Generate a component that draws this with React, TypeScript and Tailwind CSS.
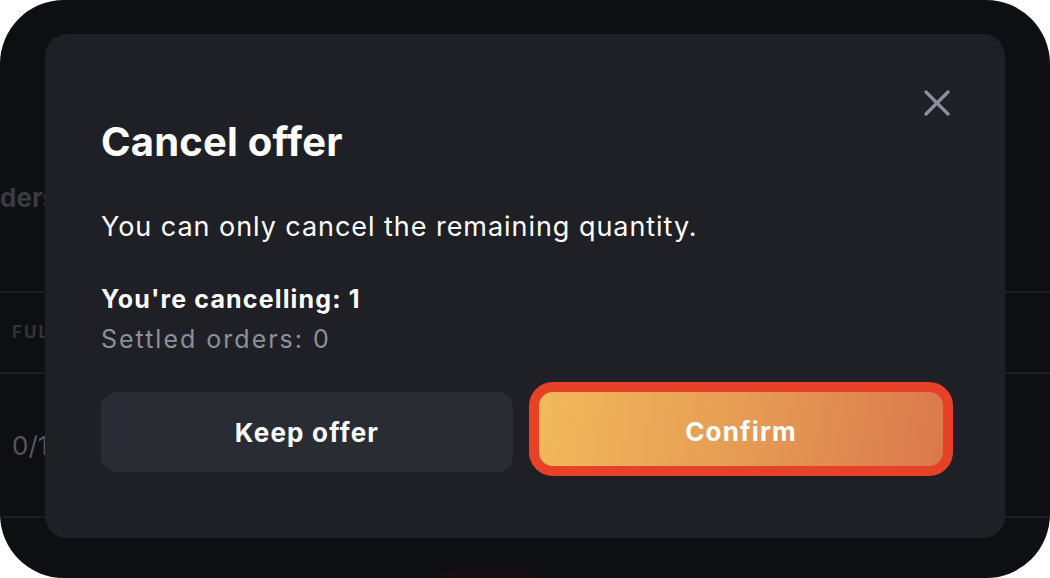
import React from "react";

const font = { fontFamily: "Inter, 'Noto Sans', 'Liberation Sans', sans-serif" };

export default function App() {
  return (
    <div className="w-[1050px] h-[578px] bg-white overflow-hidden" style={font}>
      <div className="relative h-full w-full rounded-[64px] bg-[#0e0f13] overflow-hidden">
        {/* background page content */}
        <div className="flex flex-col pt-[180px]">
          <div className="h-[111px] w-[45px] overflow-hidden">
            <div className="text-[26px] leading-[36px] font-bold text-[#3a3b41] whitespace-nowrap">ders</div>
          </div>
          <div className="h-[81px] border-t-[2px] border-[#1c1d22] flex items-center">
            <div className="w-[45px] overflow-hidden pl-[12px]">
              <span className="text-[17px] font-bold tracking-[2px] text-[#33343a] whitespace-nowrap">FUL</span>
            </div>
          </div>
          <div className="h-[144px] border-t-[2px] border-[#1c1d22] flex items-center">
            <div className="w-[45px] overflow-hidden pl-[12px]">
              <span className="text-[26px] text-[#56575d] whitespace-nowrap">0/1</span>
            </div>
          </div>
          <div className="border-t-[2px] border-[#1c1d22] h-[62px] flex justify-start pl-[443px] pt-[50px]">
            <div className="w-[94px] h-[30px] rounded-[14px] bg-[#160e11]" />
          </div>
        </div>

        {/* modal */}
        <div className="absolute left-[45px] top-[34px] w-[960px] h-[504px] rounded-[22px] bg-[#1f2025] px-[56px] pt-[56px]">
          <div className="flex items-start justify-between">
            <h2 className="mt-[28px] text-[40px] leading-[48px] font-bold text-white tracking-[0.2px]">Cancel offer</h2>
            <svg width="26" height="26" viewBox="0 0 26 26" className="mr-[-1px]">
              <path d="M2 2 L24 24 M24 2 L2 24" stroke="#8a909e" strokeWidth="3.2" strokeLinecap="round" />
            </svg>
          </div>
          <p className="mt-[43px] text-[27px] leading-[36px] text-white tracking-[0.95px]">
            You can only cancel the remaining quantity.
          </p>
          <div className="mt-[34px] flex flex-col">
            <span className="text-[25px] leading-[40px] font-bold text-white tracking-[1.15px]">You're cancelling: 1</span>
            <span className="text-[25px] leading-[40px] text-[#8b909c] tracking-[2px]">Settled orders: 0</span>
          </div>
          <div className="mt-[23px] flex items-start gap-[16px]">
            <button className="shrink-0 mt-[10px] w-[412px] h-[80px] rounded-[16px] bg-[#2a2c33] text-[26px] font-bold text-white tracking-[1.2px]">
              Keep offer
            </button>
            <button className="shrink-0 w-[424px] h-[94px] pt-[4px] rounded-[24px] border-[10px] border-[#e8412a] bg-[linear-gradient(100deg,#f2b95b,#e59c55_50%,#da784d)] text-[26px] font-bold text-white tracking-[1.15px]">
              Confirm
            </button>
          </div>
        </div>
      </div>
    </div>
  );
}
